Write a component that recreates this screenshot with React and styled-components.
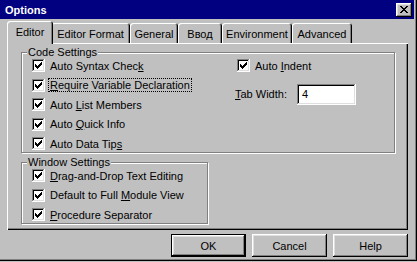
import styled, { createGlobalStyle } from 'styled-components';

const GlobalStyle = createGlobalStyle`
  html, body {
    margin: 0;
    background: #c0c0c0;
  }
  body {
    font-family: "Liberation Sans", Arial, sans-serif;
    font-size: 11px;
    color: #000;
  }
`;

const tabs = [
  { label: 'Editor', width: 42, active: true },
  { label: 'Editor Format', width: 79 },
  { label: 'General', width: 48 },
  { label: 'Ввод', width: 44 },
  { label: 'Environment', width: 70 },
  { label: 'Advanced', width: 60 },
];

const codeOptions = [
  ['Auto Syntax Chec', 'k', ''],
  ['', 'R', 'equire Variable Declaration', true],
  ['Auto ', 'L', 'ist Members'],
  ['Auto ', 'Q', 'uick Info'],
  ['Auto Data Tip', 's', ''],
];

const windowOptions = [
  ['', 'D', 'rag-and-Drop Text Editing'],
  ['Default to Full ', 'M', 'odule View'],
  ['', 'P', 'rocedure Separator'],
];

const CheckMark = () => (
  <svg width="7" height="7" viewBox="0 0 7 7" shapeRendering="crispEdges">
    <path d="M6 0h1v1h-1z M5 1h2v1h-2z M0 2h1v1h-1z M4 2h3v1h-3z M0 3h2v1h-2z M3 3h3v1h-3z M0 4h5v1h-5z M1 5h3v1h-3z M2 6h1v1h-1z" fill="#000" />
  </svg>
);

const CloseGlyph = () => (
  <svg width="8" height="7" viewBox="0 0 8 7" shapeRendering="crispEdges">
    <path d="M0 0h2v1h-2z M6 0h2v1h-2z M1 1h2v1h-2z M5 1h2v1h-2z M2 2h4v1h-4z M3 3h2v1h-2z M2 4h4v1h-4z M1 5h2v1h-2z M5 5h2v1h-2z M0 6h2v1h-2z M6 6h2v1h-2z" fill="#000" />
  </svg>
);

const CheckOption = ({ before, letter, after, focus }) => (
  <Row>
    <Box>
      <CheckMark />
    </Box>
    <Label $focus={focus}>
      {before}
      <Key>{letter}</Key>
      {after}
    </Label>
  </Row>
);

const App = () => {
  return (
    <>
      <GlobalStyle />
      <Window>
        <TitleBar>
          <Title>Options</Title>
          <CloseButton>
            <CloseGlyph />
          </CloseButton>
        </TitleBar>
        <Body>
          <TabStrip>
            {tabs.map((t) => (
              <Tab key={t.label} $width={t.width} $active={t.active}>
                {t.label}
              </Tab>
            ))}
          </TabStrip>
          <Panel>
            <Group $height={101}>
              <GroupLabel>Code Settings</GroupLabel>
              <Columns>
                <div>
                  {codeOptions.map(([b, l, a, f]) => (
                    <CheckOption key={b + l + a} before={b} letter={l} after={a} focus={f} />
                  ))}
                </div>
                <div>
                  <CheckOption before="Auto " letter="I" after="ndent" />
                  <FieldRow>
                    <FieldLabel>
                      <Key>T</Key>ab Width:
                    </FieldLabel>
                    <TextBox>4</TextBox>
                  </FieldRow>
                </div>
              </Columns>
            </Group>
            <Group $width={187} $height={62}>
              <GroupLabel>Window Settings</GroupLabel>
              {windowOptions.map(([b, l, a]) => (
                <CheckOption key={b + l + a} before={b} letter={l} after={a} />
              ))}
            </Group>
          </Panel>
          <ButtonRow>
            <Button $default>OK</Button>
            <Button>Cancel</Button>
            <Button>Help</Button>
          </ButtonRow>
        </Body>
      </Window>
    </>
  );
};

const Window = styled.div`
  width: 417px;
  height: 261px;
  box-sizing: border-box;
  background: #c0c0c0;
  box-shadow: inset -1px -1px #000, inset -2px -2px #808080;
`;

const TitleBar = styled.div`
  height: 19px;
  margin-right: 3px;
  padding: 0 2px 0 5px;
  background: #000080;
  display: flex;
  align-items: center;
  justify-content: space-between;
`;

const Title = styled.span`
  color: #fff;
  font-weight: bold;
  font-size: 11px;
  line-height: 13px;
  padding-top: 1px;
`;

const CloseButton = styled.div`
  width: 16px;
  height: 14px;
  background: #c0c0c0;
  box-shadow: inset -1px -1px #000, inset 1px 1px #fff, inset -2px -2px #808080, inset 2px 2px #dfdfdf;
  display: flex;
  align-items: center;
  justify-content: center;
  padding-left: 0px;
`;

const Body = styled.div`
  padding: 0 9px 0 7px;
`;

const TabStrip = styled.div`
  display: flex;
  align-items: flex-end;
  height: 22px;
  margin-top: 2px;
  padding-left: 2px;
  position: relative;
  z-index: 1;
`;

const Tab = styled.div`
  box-sizing: border-box;
  width: ${(p) => (p.$active ? p.$width + 4 : p.$width)}px;
  height: ${(p) => (p.$active ? 23 : 20)}px;
  margin: ${(p) => (p.$active ? '0 -2px -1px' : '0')};
  padding-top: 5px;
  line-height: 13px;
  text-align: center;
  white-space: nowrap;
  background: #c0c0c0;
  border-radius: 3px 3px 0 0;
  box-shadow: inset 1px 1px #fff, inset -1px 0 #000, inset -2px 0 #808080;
  position: relative;
  z-index: ${(p) => (p.$active ? 2 : 1)};
`;

const Panel = styled.div`
  box-sizing: border-box;
  height: 187px;
  padding: 9px 13px 0 14px;
  background: #c0c0c0;
  box-shadow: inset 1px 1px #fff, inset -1px -1px #000, inset -2px -2px #808080;
  display: flex;
  flex-direction: column;
  gap: 9px;
`;

const Group = styled.div`
  position: relative;
  box-sizing: border-box;
  width: ${(p) => (p.$width ? `${p.$width}px` : 'auto')};
  height: ${(p) => p.$height}px;
  padding: 3px 0 0 10px;
  border: 1px solid #808080;
  box-shadow: inset 1px 1px #fff, 1px 1px #fff;
`;

const GroupLabel = styled.span`
  position: absolute;
  top: -7px;
  left: 5px;
  padding: 0 1px;
  line-height: 13px;
  background: #c0c0c0;
`;

const Columns = styled.div`
  display: grid;
  grid-template-columns: 205px 1fr;
`;

const Row = styled.div`
  height: 19.5px;
  display: flex;
  align-items: center;
  gap: 4px;
`;

const Box = styled.div`
  width: 13px;
  height: 13px;
  box-sizing: border-box;
  flex: none;
  background: #fff;
  box-shadow: inset -1px -1px #fff, inset 1px 1px #808080, inset -2px -2px #dfdfdf, inset 2px 2px #000;
  display: flex;
  align-items: center;
  justify-content: center;
`;

const Label = styled.span`
  line-height: 12px;
  padding: 0 1px;
  white-space: nowrap;
  outline: ${(p) => (p.$focus ? '1px dotted #000' : 'none')};
`;

const Key = styled.u`
  text-decoration: underline;
`;

const FieldRow = styled.div`
  display: flex;
  align-items: center;
  margin-top: 8px;
  margin-left: -2px;
`;

const FieldLabel = styled.span`
  width: 62px;
  line-height: 13px;
  white-space: nowrap;
`;

const TextBox = styled.div`
  box-sizing: border-box;
  width: 59px;
  height: 21px;
  padding: 0 5px;
  line-height: 21px;
  background: #fff;
  box-shadow: inset -1px -1px #fff, inset 1px 1px #808080, inset -2px -2px #dfdfdf, inset 2px 2px #000;
`;

const ButtonRow = styled.div`
  display: flex;
  justify-content: flex-end;
  gap: 6px;
  margin-top: 4px;
`;

const Button = styled.div`
  box-sizing: border-box;
  width: 75px;
  height: 23px;
  display: flex;
  align-items: center;
  justify-content: center;
  background: #c0c0c0;
  border: ${(p) => (p.$default ? '1px solid #000' : 'none')};
  box-shadow: inset -1px -1px #000, inset 1px 1px #fff, inset -2px -2px #808080, inset 2px 2px #dfdfdf;
`;

export default App;
